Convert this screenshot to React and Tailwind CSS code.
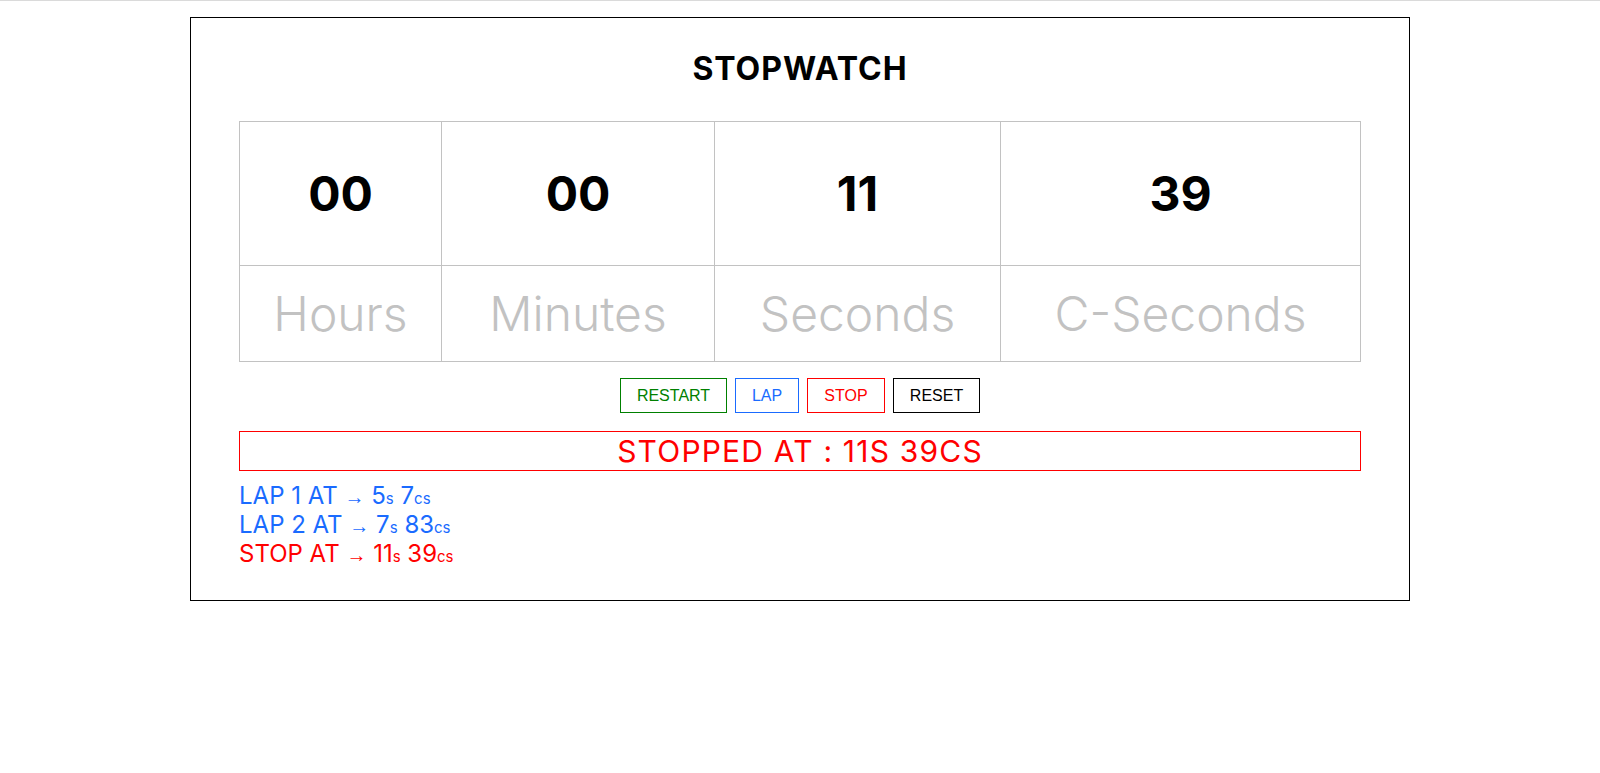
import React from 'react';

const font = { fontFamily: 'Inter, "Open Sans", sans-serif' };
const arrowFont = { fontFamily: '"Liberation Sans", Arial, sans-serif' };

const cells = [
  { value: '00', label: 'Hours' },
  { value: '00', label: 'Minutes' },
  { value: '11', label: 'Seconds' },
  { value: '39', label: 'C-Seconds' },
];

const laps = [
  { label: 'LAP 1 AT', s: '5', cs: '7', color: 'text-[#1a6bff]' },
  { label: 'LAP 2 AT', s: '7', cs: '83', color: 'text-[#1a6bff]' },
  { label: 'STOP AT', s: '11', cs: '39', color: 'text-[#ff0000]' },
];

const buttons = [
  { text: 'RESTART', cls: 'text-[#008000] border-[#008000] w-[107px]' },
  { text: 'LAP', cls: 'text-[#1a6bff] border-[#1a6bff] w-[64px]' },
  { text: 'STOP', cls: 'text-[#ff0000] border-[#ff0000] w-[78px]' },
  { text: 'RESET', cls: 'text-black border-black w-[87px]' },
];

export default function App() {
  return (
    <div className="min-h-screen bg-white border-t border-[#dadada]" style={font}>
      <div className="w-[1220px] mx-auto mt-4 border border-black px-12 pt-8 pb-[32px]">
        {/* Title */}
        <h1 className="text-center text-[32px] leading-[38px] font-bold text-black tracking-[0.03em]">
          STOPWATCH
        </h1>

        {/* Time table */}
        <div className="mt-[33px] grid grid-cols-[202px_273px_286px_1fr] border-t border-l border-[#c2c2c2]">
          {cells.map((c, i) => (
            <div
              key={'v' + i}
              className="h-[144px] flex items-center justify-center border-r border-b border-[#c2c2c2] text-[48px] font-bold text-black"
            >
              {c.value}
            </div>
          ))}
          {cells.map((c, i) => (
            <div
              key={'l' + i}
              className="h-[96px] flex items-center justify-center border-r border-b border-[#c2c2c2] text-[48px] font-light text-[#c2c2c2]"
            >
              {c.label}
            </div>
          ))}
        </div>

        {/* Controls */}
        <div className="mt-4 flex justify-center gap-2">
          {buttons.map((b) => (
            <button
              key={b.text}
              className={`h-[35px] border bg-white text-base ${b.cls}`}
              style={{ fontFamily: '"Liberation Sans", Arial, sans-serif' }}
            >
              {b.text}
            </button>
          ))}
        </div>

        {/* Stopped banner */}
        <div className="mt-[18px] h-[40px] border border-[#ff0000] flex items-center justify-center text-[30px] text-[#ff0000] tracking-[0.04em]">
          STOPPED AT : 11S 39CS
        </div>

        {/* Laps */}
        <ul className="mt-[10px]">
          {laps.map((l) => (
            <li key={l.label} className={`h-[29px] text-[24px] leading-[29px] whitespace-nowrap ${l.color}`}>
              {l.label} <span className="text-[20px] leading-none" style={arrowFont}>→</span> {l.s}
              <span className="text-[15px] leading-none">s</span> {l.cs}
              <span className="text-[15px] leading-none">cs</span>
            </li>
          ))}
        </ul>
      </div>
    </div>
  );
}
